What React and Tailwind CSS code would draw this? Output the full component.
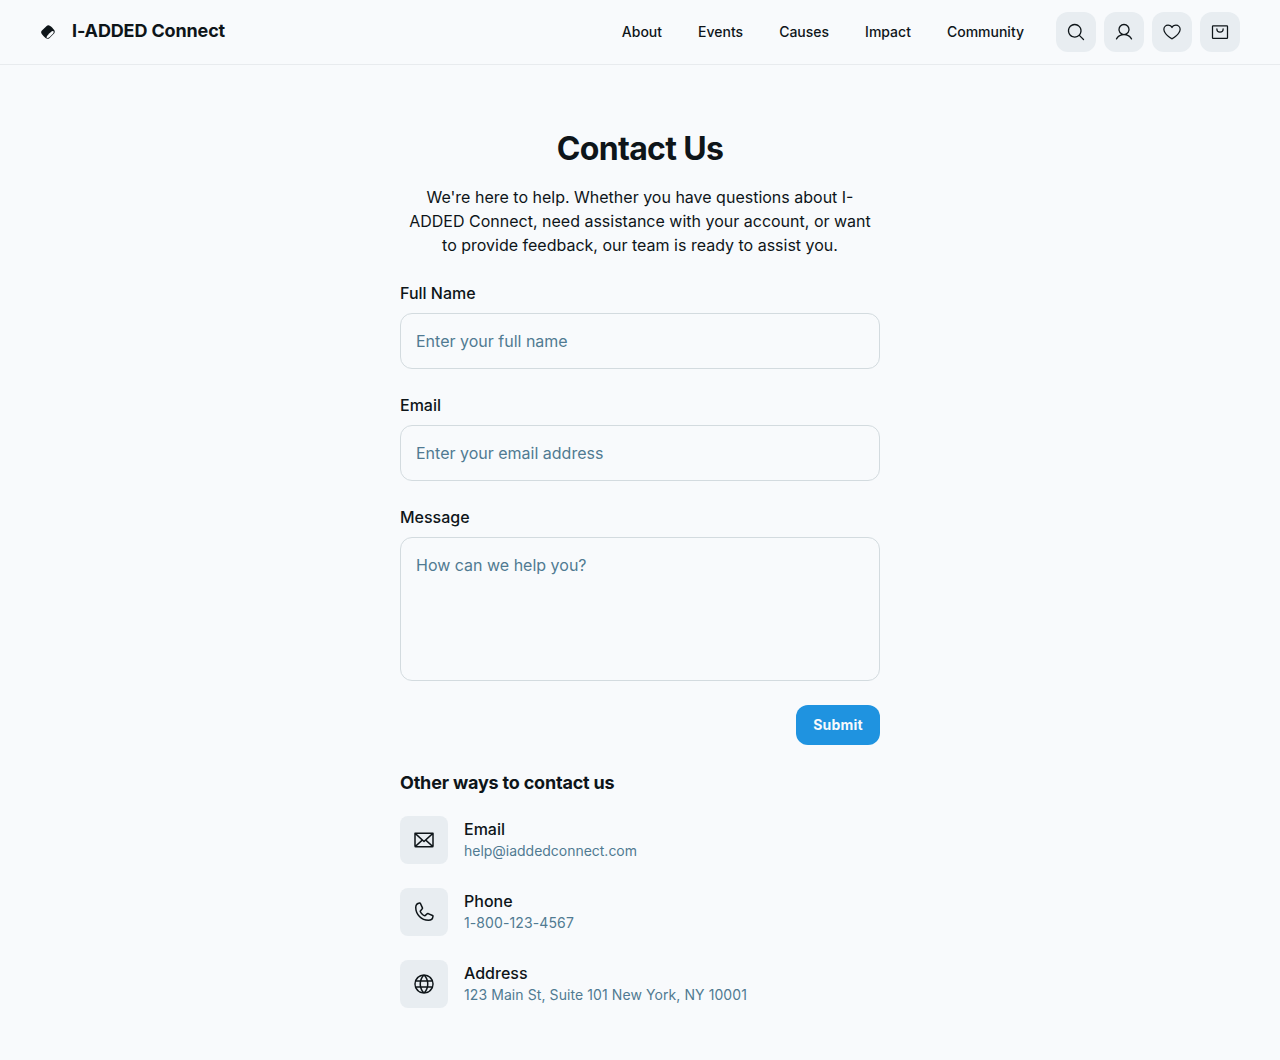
const icons = {
  search: "M229.66,218.34l-50.07-50.06a88.11,88.11,0,1,0-11.31,11.31l50.06,50.07a8,8,0,0,0,11.32-11.32ZM40,112a72,72,0,1,1,72,72A72.08,72.08,0,0,1,40,112Z",
  user: "M230.92,212c-15.23-26.33-38.7-45.21-66.09-54.16a72,72,0,1,0-73.66,0C63.78,166.78,40.31,185.66,25.08,212a8,8,0,1,0,13.85,8c18.84-32.56,52.14-52,89.07-52s70.23,19.44,89.07,52a8,8,0,1,0,13.85-8ZM72,96a56,56,0,1,1,56,56A56.06,56.06,0,0,1,72,96Z",
  heart: "M178,32c-20.65,0-38.73,8.88-50,23.89C116.73,40.88,98.65,32,78,32A62.07,62.07,0,0,0,16,94c0,70,103.79,126.66,108.21,129a8,8,0,0,0,7.58,0C136.21,220.66,240,164,240,94A62.07,62.07,0,0,0,178,32ZM128,206.8C109.74,196.16,32,147.69,32,94A46.06,46.06,0,0,1,78,48c19.45,0,35.78,10.36,42.6,27a8,8,0,0,0,14.8,0c6.82-16.67,23.15-27,42.6-27a46.06,46.06,0,0,1,46,46C224,147.61,146.24,196.15,128,206.8Z",
  bag: "M216,40H40A16,16,0,0,0,24,56V200a16,16,0,0,0,16,16H216a16,16,0,0,0,16-16V56A16,16,0,0,0,216,40Zm0,160H40V56H216V200ZM176,88a48,48,0,0,1-96,0,8,8,0,0,1,16,0,32,32,0,0,0,64,0,8,8,0,0,1,16,0Z",
  envelope: "M224,48H32a8,8,0,0,0-8,8V192a16,16,0,0,0,16,16H216a16,16,0,0,0,16-16V56A8,8,0,0,0,224,48Zm-96,85.15L52.57,64H203.43ZM98.71,128,40,181.81V74.19Zm11.84,10.85,12,11.05a8,8,0,0,0,10.82,0l12-11.05,58,53.15H52.57ZM157.29,128,216,74.18V181.82Z",
  phone: "M222.37,158.46l-47.11-21.11-.13-.06a16,16,0,0,0-15.17,1.4,8.12,8.12,0,0,0-.75.56L134.87,160c-15.42-7.49-31.34-23.29-38.83-38.51l20.78-24.71c.2-.25.39-.5.57-.77a16,16,0,0,0,1.32-15.06l0-.12L97.54,33.64a16,16,0,0,0-16.62-9.52A56.26,56.26,0,0,0,32,80c0,79.4,64.6,144,144,144a56.26,56.26,0,0,0,55.88-48.92A16,16,0,0,0,222.37,158.46ZM176,208A128.14,128.14,0,0,1,48,80,40.2,40.2,0,0,1,82.87,40a.61.61,0,0,0,0,.12l21,47L83.2,111.86a6.13,6.13,0,0,0-.57.77,16,16,0,0,0-1,15.7c9.06,18.53,27.73,37.06,46.46,46.11a16,16,0,0,0,15.75-1.14,8.44,8.44,0,0,0,.74-.56L168.89,152l47,21.05h0s.08,0,.11,0A40.21,40.21,0,0,1,176,208Z",
  globe: "M128,24A104,104,0,1,0,232,128,104.11,104.11,0,0,0,128,24Zm88,104a87.61,87.61,0,0,1-3.33,24H174.16a157.44,157.44,0,0,0,0-48h38.51A87.61,87.61,0,0,1,216,128ZM102,168H154a115.11,115.11,0,0,1-26,45A115.27,115.27,0,0,1,102,168Zm-3.9-16a140.84,140.84,0,0,1,0-48h59.88a140.84,140.84,0,0,1,0,48ZM40,128a87.61,87.61,0,0,1,3.33-24H81.84a157.44,157.44,0,0,0,0,48H43.33A87.61,87.61,0,0,1,40,128ZM154,88H102a115.11,115.11,0,0,1,26-45A115.27,115.27,0,0,1,154,88Zm52.33,0H170.71a135.28,135.28,0,0,0-22.3-45.6A88.29,88.29,0,0,1,206.37,88ZM107.59,42.4A135.28,135.28,0,0,0,85.29,88H49.63A88.29,88.29,0,0,1,107.59,42.4ZM49.63,168H85.29a135.28,135.28,0,0,0,22.3,45.6A88.29,88.29,0,0,1,49.63,168Zm98.78,45.6a135.28,135.28,0,0,0,22.3-45.6h35.66A88.29,88.29,0,0,1,148.41,213.6Z",
};

function Icon({ name, className }) {
  return (
    <svg className={className} viewBox="0 0 256 256" fill="currentColor">
      <path d={icons[name]} />
    </svg>
  );
}

function Header() {
  return (
    <header className="flex items-center justify-between border-b border-[#e8ebee] px-10 py-3">
      <div className="flex items-center gap-4">
        {/* Tilted drum with an open lower face */}
        <svg className="size-4" viewBox="0 0 48 48">
          <path fill="currentColor" d="M5 20.5 L20 6 C22.5 3.6 27 3.4 30.5 6 C35 9 39.5 13.5 42.5 18 C44.8 21.5 44.8 25 42.8 27.5 L28 42.5 C25 45.5 20.5 45 16.5 42 C12 38.5 8 34.5 5.3 30.2 C3 26.5 2.8 23 5 20.5 Z" />
          <path fill="#f8fafc" d="M40.2 21.8 C42.2 23.5 41.2 26.5 38.8 29 L29 38.8 C26 41.8 22.2 43.2 20.3 41.3 C18.5 39.4 21 36 25 31.6 C30 26.2 37 19.2 40.2 21.8 Z" />
        </svg>
        <h2 className="pb-0.5 text-lg font-bold leading-tight tracking-[-0.14px]">I-ADDED Connect</h2>
      </div>
      <div className="flex gap-8">
        <nav className="flex items-center gap-9 text-sm font-medium">
          {["About", "Events", "Causes", "Impact", "Community"].map((item) => (
            <a key={item} href="#">{item}</a>
          ))}
        </nav>
        <div className="flex gap-2">
          {["search", "user", "heart", "bag"].map((name) => (
            <button key={name} aria-label={name} className="flex size-10 items-center justify-center rounded-xl bg-[#e8edf1]">
              <Icon name={name} className="size-5" />
            </button>
          ))}
        </div>
      </div>
    </header>
  );
}

const fieldClass = "block w-full resize-none rounded-xl border border-[#d3dbdf] bg-[#f8fafc] p-[15px] text-base placeholder:text-[#507a92] placeholder:opacity-100";

function Field({ label, children }) {
  return (
    <label className="block py-3">
      <span className="block pb-2 text-base font-medium">{label}</span>
      {children}
    </label>
  );
}

const contacts = [
  { icon: "envelope", title: "Email", text: "help@iaddedconnect.com", tracking: "tracking-[-0.02px]" },
  { icon: "phone", title: "Phone", text: "1-800-123-4567", tracking: "tracking-[0.11px]" },
  { icon: "globe", title: "Address", text: "123 Main St, Suite 101 New York, NY 10001", tracking: "tracking-[0.085px]" },
];

export default function App() {
  return (
    <div className="min-h-screen bg-[#f8fafc] font-['Inter',sans-serif] text-[#0e1519]">
      <Header />
      <main className="mx-auto w-[480px] pt-[60px]">
        <h1 className="pt-1 text-center text-[32px] font-bold leading-10 tracking-[-0.68px]">Contact Us</h1>
        <p className="px-2 pb-3 pt-4 text-center text-base">
          We're here to help. Whether you have questions about I-ADDED Connect, need assistance with your account, or want to provide feedback, our team is ready to assist you.
        </p>
        <form>
          <Field label="Full Name">
            <input className={`${fieldClass} h-14`} placeholder="Enter your full name" />
          </Field>
          <Field label="Email">
            <input className={`${fieldClass} h-14`} placeholder="Enter your email address" />
          </Field>
          <Field label="Message">
            <textarea className={`${fieldClass} h-36`} placeholder="How can we help you?" />
          </Field>
          <div className="flex justify-end py-3">
            <button type="button" className="h-10 w-[84px] rounded-xl bg-[#1f93e0] text-sm font-bold tracking-[0.015em] text-[#f8fafc]">Submit</button>
          </div>
        </form>
        <h3 className="pb-[9px] pt-[15px] text-lg font-bold leading-tight tracking-[-0.19px]">Other ways to contact us</h3>
        {contacts.map(({ icon, title, text, tracking }) => (
          <div key={icon} className="flex h-[72px] items-center gap-4">
            <div className="flex size-12 items-center justify-center rounded-lg bg-[#e8edf1]">
              <Icon name={icon} className="size-6" />
            </div>
            <div className="pb-0.5">
              <p className="text-base font-medium">{title}</p>
              <p className={`text-sm text-[#507a92] ${tracking}`}>{text}</p>
            </div>
          </div>
        ))}
      </main>
    </div>
  );
}
